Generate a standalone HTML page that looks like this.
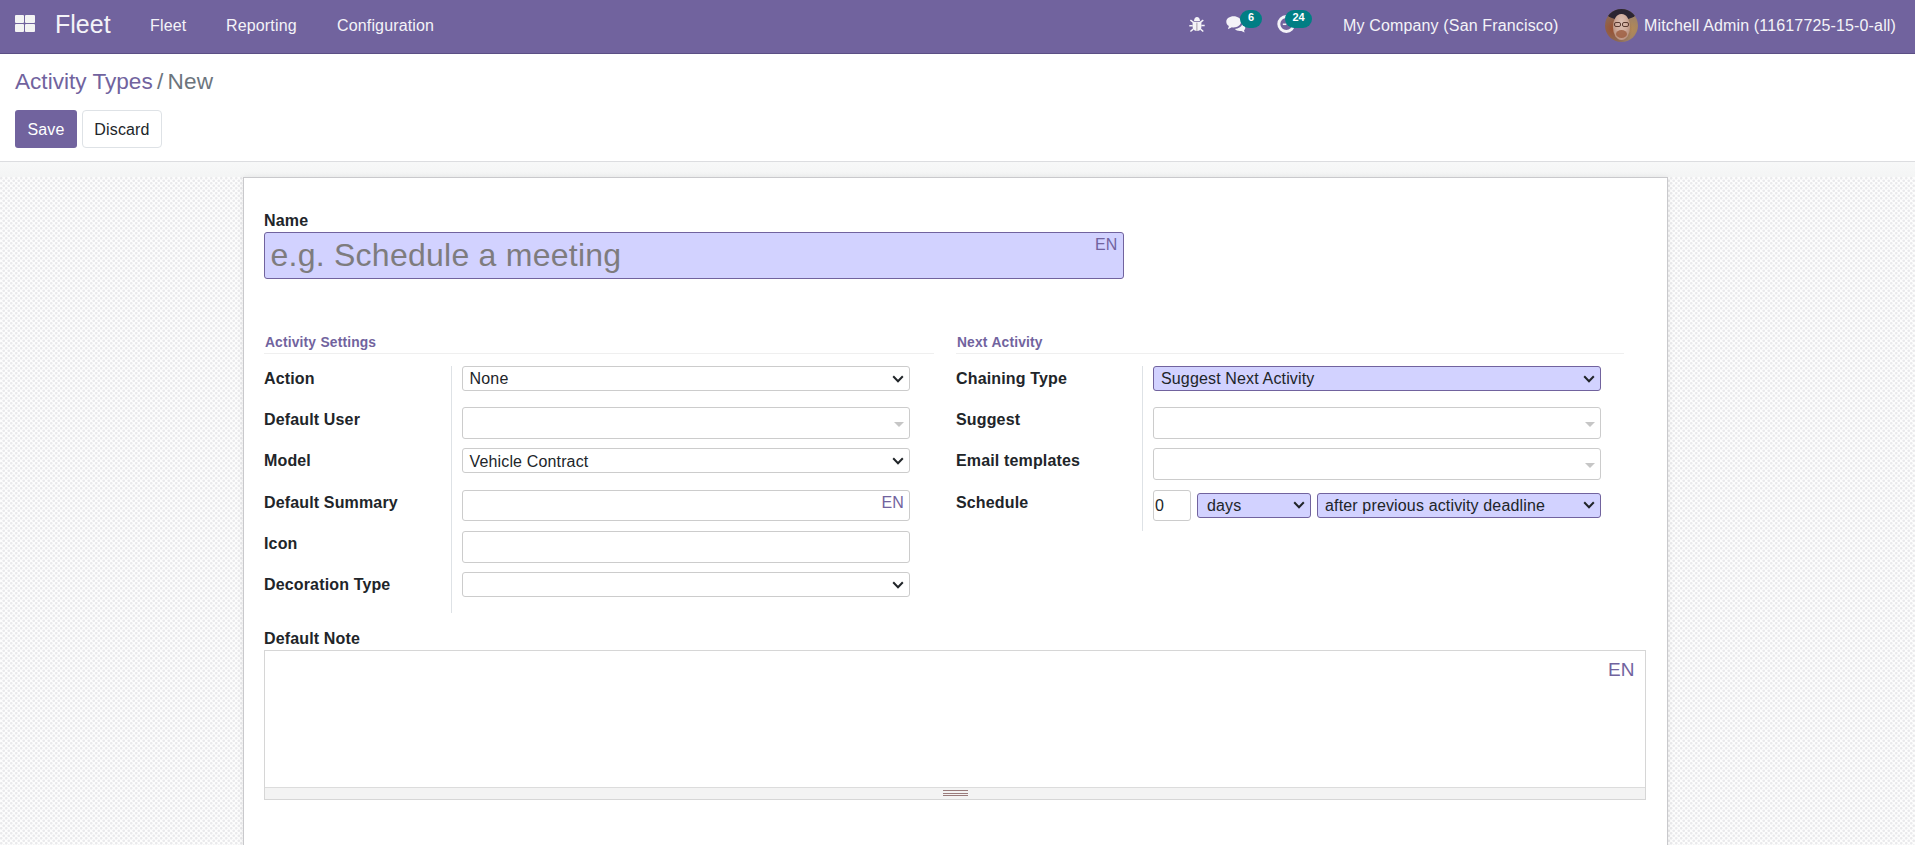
<!DOCTYPE html>
<html><head><meta charset="utf-8">
<style>
*{box-sizing:border-box;margin:0;padding:0}
html,body{width:1915px;height:845px;overflow:hidden;background:#fff;font-family:"Liberation Sans",sans-serif;color:#212529}
.a{position:absolute;white-space:nowrap;line-height:1;letter-spacing:0.15px}
#nav{position:absolute;left:0;top:0;width:1915px;height:54px;background:#71639e;border-bottom:1px solid #5b4f85}
.nt{color:#f4f3f8;font-size:16px;letter-spacing:0.15px}
.sq{position:absolute;background:#f3f3f3;border-radius:1px;width:9px;height:8px}
.badge{position:absolute;background:#017e84;color:#fff;font-size:11px;font-weight:bold;border-radius:9px;height:18px;line-height:14px;text-align:center}
#cp{position:absolute;left:0;top:54px;width:1915px;height:108px;background:#fff;border-bottom:1px solid #dcdde0}
#bg{position:absolute;left:0;top:162px;width:1915px;height:683px;
 background-color:#fdfdfd;
 background-image:radial-gradient(circle at 1.25px 1.25px,#eaeaec 0.9px,rgba(234,234,236,0) 1.7px),radial-gradient(circle at 3.75px 3.75px,#eaeaec 0.9px,rgba(234,234,236,0) 1.7px);
 background-size:5px 5px}
#strip{position:absolute;left:0;top:162px;width:1915px;height:15px;background:linear-gradient(#f7f8f8,#f4f5f5)}
#sheet{position:absolute;left:243px;top:177px;width:1425px;height:700px;background:#fff;border:1px solid #c9c9cc;box-shadow:0 0 6px rgba(0,0,0,.08)}
.lbl{font-size:16px;font-weight:bold;color:#212529}
.sep{font-size:13.8px;font-weight:bold;color:#71639e;word-spacing:0.5px}
.inp{position:absolute;border:1px solid #cccccc;border-radius:3px;background:#fff}
.req{background:#d2d2ff;border-color:#71639e}
.val{font-size:16px;color:#212529}
.en{font-size:16px;color:#71639e}
.chev{position:absolute;width:12px;height:8px}
.caret{position:absolute;width:0;height:0;border-left:5px solid transparent;border-right:5px solid transparent;border-top:5px solid #c6c6c6}
.vl{position:absolute;width:1px;background:#dee2e6}
.hl{position:absolute;height:1px;background:#efefef}
</style></head>
<body>
<div id="nav">
  <div class="sq" style="left:15px;top:15px"></div>
  <div class="sq" style="left:25px;top:15px;width:10px"></div>
  <div class="sq" style="left:15px;top:24px"></div>
  <div class="sq" style="left:25px;top:24px;width:10px"></div>
  <div class="a nt" style="left:55px;top:12.3px;font-size:25px;letter-spacing:0">Fleet</div>
  <div class="a nt" style="left:150px;top:18.2px">Fleet</div>
  <div class="a nt" style="left:226px;top:18.2px">Reporting</div>
  <div class="a nt" style="left:337px;top:18.2px">Configuration</div>
  <!-- bug -->
  <svg class="a" style="left:1188px;top:16px" width="18" height="18" viewBox="0 0 18 18">
    <g fill="#f4f3f8">
    <path d="M6 5.1C6 2.6 7.4 1 9 1s3 1.6 3 4.1z"/>
    <path d="M4.6 5.8h8.8V11c0 2.5-2 3.9-4.4 3.9S4.6 13.5 4.6 11z"/>
    </g>
    <path d="M2.4 4.1l2.8 2M15.3 4.1l-2.8 2M1.3 9.7h3.4M13.3 9.6h3.4M2.4 15.5l2.8-2.3M15.3 15.5l-2.8-2.3" stroke="#f4f3f8" stroke-width="1.5" fill="none"/>
    <path d="M8.9 6.6v8.3" stroke="#9b8f9e" stroke-width="0.9"/>
  </svg>
  <!-- chat -->
  <svg class="a" style="left:1225px;top:15px" width="23" height="19" viewBox="0 0 23 19">
    <path d="M8.6 1.3C4.6 1.3 1.3 3.6 1.3 6.8c0 1.8.9 3.3 2.6 4.3L2.9 14.3 6.9 12.2c.6.1 1.1.2 1.7.2 4.1 0 7.4-2.4 7.4-5.6S12.7 1.3 8.6 1.3z" fill="#f4f3f8"/>
    <path d="M17.2 9.6c-1 2.4-3.8 4.1-7.3 4.5.9 1.2 2.8 2 5 2 .5 0 1-.1 1.5-.1l3.2 1.6-.6-2.4c.9-.7 1.3-1.6 1.3-2.5 0-1.3-1.2-2.5-3.1-3.1z" fill="#f4f3f8"/>
  </svg>
  <div class="badge" style="left:1240px;top:10px;width:22px">6</div>
  <!-- activity -->
  <svg class="a" style="left:1276px;top:13px" width="21" height="21" viewBox="0 0 21 21">
    <circle cx="10.3" cy="11" r="7.5" fill="none" stroke="#f4f3f8" stroke-width="3"/>
    <path d="M10.3 11.3H6.8" stroke="#f4f3f8" stroke-width="1.5"/>
  </svg>
  <div class="badge" style="left:1285px;top:10px;width:27px">24</div>
  <div class="a nt" style="left:1343px;top:18.2px">My Company (San Francisco)</div>
  <div class="a" style="left:1605px;top:9px;width:33px;height:33px;border-radius:50%;overflow:hidden;background:radial-gradient(circle at 25% 60%,#9a5030 0,#8e6650 35%,transparent 60%),radial-gradient(circle at 78% 62%,#b48a55 0,#9c8068 40%,transparent 70%),#7d6458">
    <div class="a" style="left:1px;top:-6px;width:31px;height:17px;border-radius:50%;background:#2b2532"></div>
    <div class="a" style="left:8px;top:5px;width:17px;height:26px;border-radius:48%;background:radial-gradient(ellipse at 50% 35%,#dcc1b6 0,#cfab9c 45%,#a77d68 100%)"></div>
    <div class="a" style="left:9px;top:13px;width:7px;height:5px;border:1px solid #5a3a30;border-radius:2px"></div>
    <div class="a" style="left:17px;top:13px;width:7px;height:5px;border:1px solid #5a3a30;border-radius:2px"></div>
    <div class="a" style="left:11px;top:21px;width:11px;height:8px;border-radius:50%;background:#9b5a3c;opacity:.8"></div>
  </div>
  <div class="a nt" style="left:1644px;top:18.2px">Mitchell Admin (11617725-15-0-all)</div>
</div>

<div id="cp">
  <div class="a" style="left:15px;top:16.8px;font-size:22.6px;letter-spacing:0;color:#71639e">Activity Types</div>
  <div class="a" style="left:157px;top:16.8px;font-size:22.6px;color:#6c757d">/</div>
  <div class="a" style="left:167.5px;top:16.8px;font-size:22.6px;color:#6c757d">New</div>
  <div class="a" style="left:15px;top:56px;width:62px;height:38px;background:#71639e;border-radius:3px;color:#fff;font-size:16px;line-height:40px;text-align:center">Save</div>
  <div class="a" style="left:82px;top:56px;width:80px;height:38px;background:#fff;border:1px solid #dee2e6;border-radius:4px;color:#212529;font-size:16px;line-height:38px;text-align:center">Discard</div>
</div>

<div id="bg"></div>
<div id="strip"></div>

<div id="sheet"></div>

<!-- form content absolute to page -->
<div class="a lbl" style="left:264px;top:213.3px">Name</div>
<div class="inp req" style="left:264px;top:232px;width:860px;height:47px"></div>
<div class="a" style="left:270.5px;top:239.2px;font-size:32px;letter-spacing:0.25px;color:#7e7c7e">e.g. Schedule a meeting</div>
<div class="a en" style="left:1095px;top:237.2px">EN</div>

<div class="a sep" style="left:265px;top:336px">Activity Settings</div>
<div class="hl" style="left:264px;top:353px;width:670px"></div>
<div class="a sep" style="left:957px;top:336px">Next Activity</div>
<div class="hl" style="left:956px;top:353px;width:668px"></div>

<!-- left group -->
<div class="vl" style="left:451px;top:366px;height:247px"></div>
<div class="a lbl" style="left:264px;top:370.7px">Action</div>
<div class="inp" style="left:462px;top:366px;width:448px;height:25px"></div>
<div class="a val" style="left:469.6px;top:370.5px">None</div>
<svg class="chev" style="left:892px;top:375px" viewBox="0 0 12 8"><path d="M1.2 1.3L6 6.2l4.8-4.9" fill="none" stroke="#212529" stroke-width="2"/></svg>

<div class="a lbl" style="left:264px;top:411.5px">Default User</div>
<div class="inp" style="left:462px;top:407px;width:448px;height:32px"></div>
<div class="caret" style="left:894px;top:422px"></div>

<div class="a lbl" style="left:264px;top:453.2px">Model</div>
<div class="inp" style="left:462px;top:448px;width:448px;height:25px"></div>
<div class="a val" style="left:469.5px;top:453.8px">Vehicle Contract</div>
<svg class="chev" style="left:892px;top:457px" viewBox="0 0 12 8"><path d="M1.2 1.3L6 6.2l4.8-4.9" fill="none" stroke="#212529" stroke-width="2"/></svg>

<div class="a lbl" style="left:264px;top:495px">Default Summary</div>
<div class="inp" style="left:462px;top:490px;width:448px;height:31px"></div>
<div class="a en" style="left:881.5px;top:494.5px">EN</div>

<div class="a lbl" style="left:264px;top:536px">Icon</div>
<div class="inp" style="left:462px;top:531px;width:448px;height:32px"></div>

<div class="a lbl" style="left:264px;top:576.7px">Decoration Type</div>
<div class="inp" style="left:462px;top:572px;width:448px;height:25px"></div>
<svg class="chev" style="left:892px;top:581px" viewBox="0 0 12 8"><path d="M1.2 1.3L6 6.2l4.8-4.9" fill="none" stroke="#212529" stroke-width="2"/></svg>

<!-- right group -->
<div class="vl" style="left:1142px;top:366px;height:165px"></div>
<div class="a lbl" style="left:956px;top:371.2px">Chaining Type</div>
<div class="inp req" style="left:1153px;top:366px;width:448px;height:25px"></div>
<div class="a val" style="left:1161px;top:370.5px">Suggest Next Activity</div>
<svg class="chev" style="left:1583px;top:375px" viewBox="0 0 12 8"><path d="M1.2 1.3L6 6.2l4.8-4.9" fill="none" stroke="#212529" stroke-width="2"/></svg>

<div class="a lbl" style="left:956px;top:411.8px">Suggest</div>
<div class="inp" style="left:1153px;top:407px;width:448px;height:32px"></div>
<div class="caret" style="left:1585px;top:422px"></div>

<div class="a lbl" style="left:956px;top:453.3px">Email templates</div>
<div class="inp" style="left:1153px;top:448px;width:448px;height:32px"></div>
<div class="caret" style="left:1585px;top:463px"></div>

<div class="a lbl" style="left:956px;top:494.5px">Schedule</div>
<div class="inp" style="left:1153px;top:490px;width:38px;height:31px"></div>
<div class="a val" style="left:1155px;top:498px">0</div>
<div class="inp req" style="left:1197px;top:493px;width:114px;height:25px"></div>
<div class="a val" style="left:1207px;top:498px">days</div>
<svg class="chev" style="left:1293px;top:501px" viewBox="0 0 12 8"><path d="M1.2 1.3L6 6.2l4.8-4.9" fill="none" stroke="#212529" stroke-width="2"/></svg>
<div class="inp req" style="left:1317px;top:493px;width:284px;height:25px"></div>
<div class="a val" style="left:1325px;top:498px">after previous activity deadline</div>
<svg class="chev" style="left:1583px;top:501px" viewBox="0 0 12 8"><path d="M1.2 1.3L6 6.2l4.8-4.9" fill="none" stroke="#212529" stroke-width="2"/></svg>

<!-- default note -->
<div class="a lbl" style="left:264px;top:631px">Default Note</div>
<div class="a" style="left:264px;top:650px;width:1382px;height:150px;border:1px solid #d6d6d6;background:#fff"></div>
<div class="a" style="left:265px;top:787px;width:1380px;height:12px;background:#f3f3f3;border-top:1px solid #dcdcdc"></div>
<div class="a" style="left:943px;top:790px;width:25px;height:1px;background:#9a7b7b"></div>
<div class="a" style="left:943px;top:793px;width:25px;height:1px;background:#9a7b7b"></div>
<div class="a" style="left:943px;top:795px;width:25px;height:1px;background:#9a7b7b"></div>
<div class="a" style="left:1608px;top:659.5px;font-size:19px;color:#71639e">EN</div>

</body></html>
